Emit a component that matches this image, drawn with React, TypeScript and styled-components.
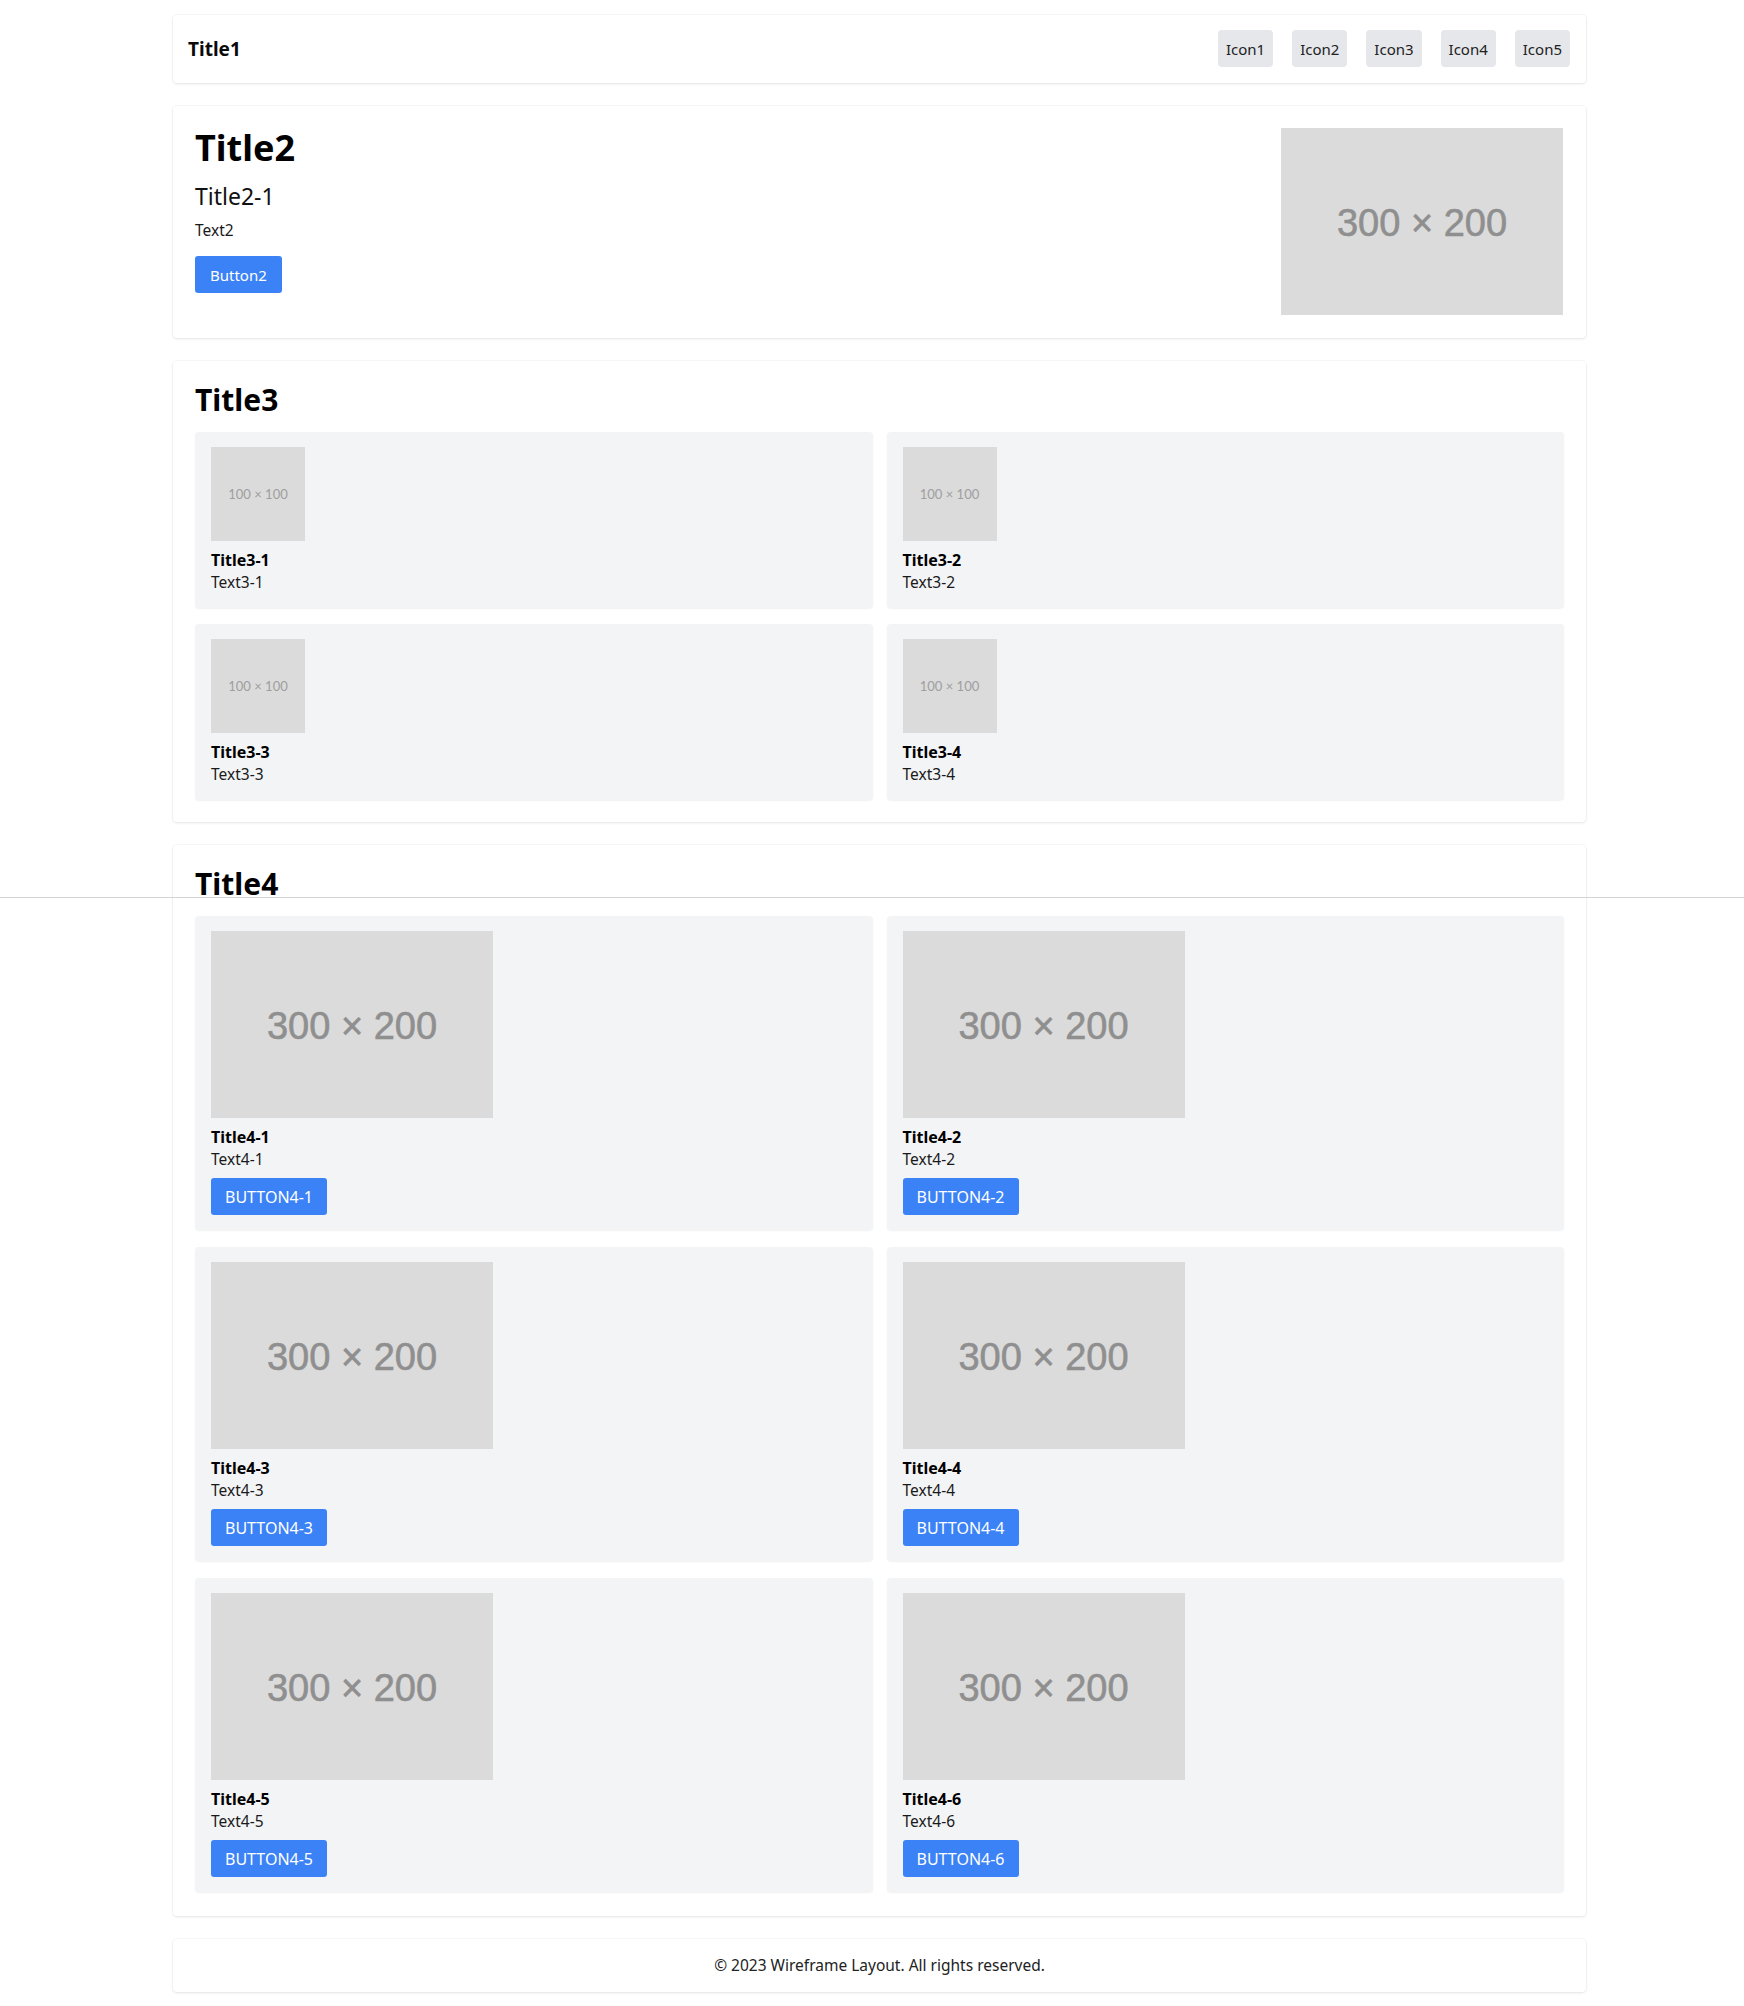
import styled, { createGlobalStyle } from "styled-components";

const GlobalStyle = createGlobalStyle`
  html, body {
    margin: 0;
    padding: 0;
    background: #ffffff;
  }
  body {
    font-family: "Noto Sans", "Open Sans", sans-serif;
    color: #111111;
  }
  * {
    box-sizing: border-box;
  }
`;

const Page = styled.div`
  position: relative;
  display: flex;
  flex-direction: column;
  gap: 23px;
  padding: 15px 158px 15px 173px;
`;

const Panel = styled.section`
  background: #ffffff;
  border-radius: 4px;
  box-shadow: 0 0 0 1px rgba(0, 0, 0, 0.025), 0 1px 3px rgba(0, 0, 0, 0.09);
`;

const Header = styled(Panel).attrs({ as: "header" })`
  display: flex;
  align-items: center;
  justify-content: space-between;
  padding: 15px 16px 16px 15px;
`;

const Brand = styled.div`
  font-size: 19px;
  font-weight: 700;
  line-height: 24px;
  color: #0a0a0a;
`;

const IconRow = styled.nav`
  display: flex;
  gap: 19px;
`;

const IconButton = styled.button`
  height: 37px;
  padding: 0 8px;
  border: none;
  border-radius: 4px;
  background: #e5e7eb;
  color: #222222;
  font-family: inherit;
  font-size: 15px;
`;

const Hero = styled(Panel)`
  display: flex;
  justify-content: space-between;
  align-items: flex-start;
  padding: 22px 23px 23px 22px;
`;

const HeroText = styled.div`
  display: flex;
  flex-direction: column;
  align-items: flex-start;
`;

const HeroTitle = styled.h1`
  margin: 0;
  font-size: 36px;
  font-weight: 700;
  line-height: 40px;
  color: #000000;
`;

const HeroSubtitle = styled.h2`
  margin: 13px 0 0;
  font-size: 23px;
  font-weight: 400;
  line-height: 30px;
`;

const BodyText = styled.p<{ $gap?: number }>`
  margin: ${(p) => p.$gap ?? 0}px 0 0;
  font-size: 15.5px;
  line-height: 22px;
  color: #1a1a1a;
`;

const PrimaryButton = styled.button<{ $upper?: boolean }>`
  margin-top: ${(p) => (p.$upper ? 8 : 15)}px;
  height: 37px;
  padding: 0 ${(p) => (p.$upper ? 14 : 15)}px;
  border: none;
  border-radius: 3px;
  background: #3b82f6;
  color: #ffffff;
  font-family: inherit;
  font-size: ${(p) => (p.$upper ? 16 : 15)}px;
  text-transform: ${(p) => (p.$upper ? "uppercase" : "none")};
`;

const Placeholder = styled.div<{ $w: number; $h: number; $small?: boolean }>`
  flex: none;
  width: ${(p) => p.$w}px;
  height: ${(p) => p.$h}px;
  display: flex;
  align-items: center;
  justify-content: center;
  padding-top: ${(p) => (p.$small ? 0 : 3)}px;
  background: #dbdbdb;
  color: ${(p) => (p.$small ? "#9e9e9e" : "#8f8f8f")};
  font-family: ${(p) => (p.$small ? "Lato" : '"Liberation Sans"')}, sans-serif;
  font-size: ${(p) => (p.$small ? 13 : 38)}px;
  -webkit-text-stroke: ${(p) => (p.$small ? 0 : 0.6)}px #8f8f8f;
`;

const Section = styled(Panel)<{ $bottom?: number }>`
  padding: 22px 22px ${(p) => p.$bottom ?? 22}px;
`;

const SectionTitle = styled.h2`
  margin: 0 0 15px;
  font-size: 30px;
  font-weight: 700;
  line-height: 34px;
  color: #000000;
`;

const Grid = styled.div<{ $rowGap?: number }>`
  display: grid;
  grid-template-columns: 1fr 1fr;
  column-gap: 14px;
  row-gap: ${(p) => p.$rowGap ?? 16}px;
`;

const Card = styled.div`
  display: flex;
  flex-direction: column;
  align-items: flex-start;
  padding: 15px 16px;
  border-radius: 4px;
  background: #f3f4f6;
  box-shadow: 0 1px 2px rgba(0, 0, 0, 0.06);
`;

const CardTitle = styled.h3`
  margin: 8px 0 0;
  font-size: 16px;
  font-weight: 700;
  line-height: 22px;
  color: #000000;
`;

const Footer = styled(Panel).attrs({ as: "footer" })`
  padding: 16px;
  text-align: center;
  font-size: 15.5px;
  line-height: 21px;
  color: #222222;
`;

/* stitching seam visible in the captured page */
const Seam = styled.div`
  position: absolute;
  left: 0;
  right: 0;
  top: 897px;
  height: 1px;
  background: #d4d4d4;
  pointer-events: none;
`;

const icons = ["Icon1", "Icon2", "Icon3", "Icon4", "Icon5"];
const features = [1, 2, 3, 4];
const products = [1, 2, 3, 4, 5, 6];

export default function App() {
  return (
    <>
      <GlobalStyle />
      <Page>
        <Header>
          <Brand>Title1</Brand>
          <IconRow>
            {icons.map((icon) => (
              <IconButton key={icon}>{icon}</IconButton>
            ))}
          </IconRow>
        </Header>

        <Hero>
          <HeroText>
            <HeroTitle>Title2</HeroTitle>
            <HeroSubtitle>Title2-1</HeroSubtitle>
            <BodyText $gap={8}>Text2</BodyText>
            <PrimaryButton>Button2</PrimaryButton>
          </HeroText>
          <Placeholder $w={282} $h={187}>
            300 × 200
          </Placeholder>
        </Hero>

        <Section>
          <SectionTitle>Title3</SectionTitle>
          <Grid>
            {features.map((n) => (
              <Card key={n}>
                <Placeholder $w={94} $h={94} $small>
                  100 × 100
                </Placeholder>
                <CardTitle>Title3-{n}</CardTitle>
                <BodyText>Text3-{n}</BodyText>
              </Card>
            ))}
          </Grid>
        </Section>

        <Section $bottom={24}>
          <SectionTitle>Title4</SectionTitle>
          <Grid $rowGap={17}>
            {products.map((n) => (
              <Card key={n}>
                <Placeholder $w={282} $h={187}>
                  300 × 200
                </Placeholder>
                <CardTitle>Title4-{n}</CardTitle>
                <BodyText>Text4-{n}</BodyText>
                <PrimaryButton $upper>Button4-{n}</PrimaryButton>
              </Card>
            ))}
          </Grid>
        </Section>

        <Footer>© 2023 Wireframe Layout. All rights reserved.</Footer>
        <Seam />
      </Page>
    </>
  );
}
